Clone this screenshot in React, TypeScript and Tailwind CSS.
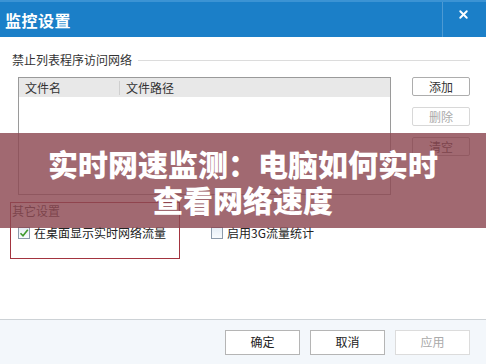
import { X } from 'lucide-react';

const font = { fontFamily: '"Noto Sans CJK SC", "Microsoft YaHei", sans-serif' };

function SideButton({ label, disabled }: { label: string; disabled?: boolean }) {
  return (
    <div
      className={`w-[58px] h-[19px] flex items-center justify-center text-[12px] border rounded-[2px] bg-white ${
        disabled ? 'border-[#d8d8d8] text-[#aaa]' : 'border-[#adadad] text-[#333]'
      }`}
    >
      {label}
    </div>
  );
}

function FooterButton({ label, disabled }: { label: string; disabled?: boolean }) {
  return (
    <div
      className={`w-[75px] h-[25px] flex items-center justify-center text-[12px] border bg-white ${
        disabled ? 'border-[#dcdcdc] text-[#aaa]' : 'border-[#b5b5b5] text-[#222]'
      }`}
    >
      {label}
    </div>
  );
}

function Checkbox({ checked }: { checked?: boolean }) {
  return (
    <div className="w-[12px] h-[12px] border border-[#8c9bab] bg-gradient-to-b from-[#e6eef6] to-[#f8fbfd] flex items-center justify-center">
      {checked && (
        <svg width="10" height="10" viewBox="0 0 10 10">
          <path d="M1.5 5.2 L4 7.8 L8.8 1.8" fill="none" stroke="#3f9a2e" strokeWidth="1.6" />
        </svg>
      )}
    </div>
  );
}

export default function App() {
  return (
    <div className="relative w-[486px] h-[364px] flex flex-col overflow-hidden bg-white" style={font}>
      {/* Title bar */}
      <div className="h-[37px] bg-[#1b7fc8] border-t-[2px] border-[#3b93d4] flex items-center justify-between pl-[5px] pr-[16px]">
        <span className="text-white font-bold text-[16px] leading-none tracking-[0.5px]">监控设置</span>
        <div className="flex items-center h-full">
          <div className="w-px h-full bg-[#4d9ad3] mr-[14px] self-start" />
          <X className="w-[13px] h-[13px] text-white -mt-[10px]" strokeWidth={3.5} />
        </div>
      </div>

      {/* Content */}
      <div className="flex-1 px-[10px] pt-[16px]">
        <div className="flex items-center pl-[2px]">
          <span className="text-[12px] leading-[14px] text-[#333]">禁止列表程序访问网络</span>
          <div className="flex-1 h-px bg-[#dcdcdc] ml-[6px] mr-[6px]" />
        </div>

        <div className="flex mt-[10px]">
          <div className="ml-[8px] w-[373px] h-[118px] border border-[#9a9a9a] bg-white">
            <div className="h-[19px] bg-[#e8e8e8] flex items-center text-[12px] text-[#333]">
              <span className="w-[100px] pl-[6px]">文件名</span>
              <div className="w-px h-[14px] bg-[#cfcfcf]" />
              <span className="pl-[6px]">文件路径</span>
            </div>
          </div>
          <div className="ml-[21px] flex flex-col gap-[11px]">
            <SideButton label="添加" />
            <SideButton label="删除" disabled />
            <SideButton label="清空" />
          </div>
        </div>

        <div className="mt-[9px] pl-[2px]">
          <div className="text-[12px] leading-[14px] text-[#333]">其它设置</div>
          <div className="flex items-center mt-[6px] pl-[6px] text-[12px] text-[#222]">
            <div className="flex items-center gap-[4px] w-[193px]">
              <Checkbox checked />
              <span>在桌面显示实时网络流量</span>
            </div>
            <div className="flex items-center gap-[4px]">
              <Checkbox />
              <span>启用3G流量统计</span>
            </div>
          </div>
        </div>
      </div>

      {/* Footer */}
      <div className="h-[45px] bg-[#f3f7fb] border-t border-[#cdd2d6] flex items-center justify-end gap-[10px] pr-[16px]">
        <FooterButton label="确定" />
        <FooterButton label="取消" />
        <FooterButton label="应用" disabled />
      </div>

      {/* Red annotation box */}
      <div className="absolute left-[10px] top-[202px] w-[170px] h-[57px] border border-[#a3343f]" />

      {/* Banner overlay */}
      <div className="absolute left-0 right-0 top-[133px] h-[95px] bg-[rgba(140,72,82,0.82)] flex items-center justify-center">
        <div className="w-[400px] text-center text-white font-black text-[30px] leading-[36px]">
          实时网速监测：电脑如何实时查看网络速度
        </div>
      </div>
    </div>
  );
}
